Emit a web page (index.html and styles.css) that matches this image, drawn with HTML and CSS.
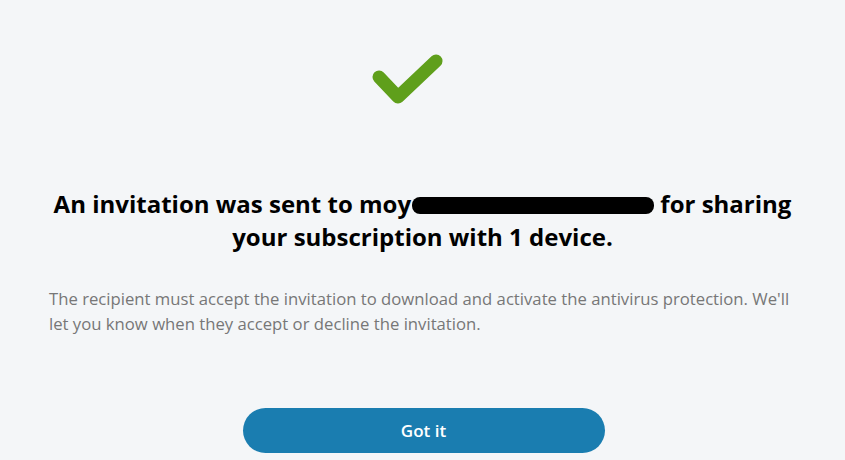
FILE: index.html
```html
<!DOCTYPE html>
<html lang="en">
<head>
  <meta charset="UTF-8">
  <title>Invitation sent</title>
  <link rel="stylesheet" href="styles.css">
</head>
<body>
  <div class="dialog">
    <div class="check">
      <svg width="85" height="70" viewBox="0 0 85 70">
        <path d="M14 32 L33 52 L71 16" fill="none" stroke="#5f9f1b" stroke-width="13" stroke-linecap="round" stroke-linejoin="round"/>
      </svg>
    </div>

    <h2 class="title">An invitation was sent to moy<span class="hidden-mail"></span> for sharing<br>your subscription with 1 device.</h2>

    <p class="note">The recipient must accept the invitation to download and activate the antivirus protection. We'll let you know when they accept or decline the invitation.</p>

    <div class="actions">
      <button class="btn-ok">Got it</button>
    </div>
  </div>
</body>
</html>
```

FILE: styles.css
```css
body {
  margin: 0;
  background-color: #f4f6f8;
  font-family: "Open Sans", "Noto Sans", Arial, sans-serif;
}

.dialog {
  padding: 45px 49px 0 49px;
}

.check {
  display: flex;
  justify-content: center;
  margin-left: -30px;
}

.check svg {
  display: block;
}

.title {
  margin: 72px -10px 0 -10px;
  font-size: 24px;
  font-weight: 700;
  line-height: 33px;
  text-align: center;
  color: #000;
}

/* e-mail address blacked out */
.hidden-mail {
  display: inline-block;
  width: 242px;
  height: 17px;
  margin-left: 1px;
  background-color: #000;
  border-radius: 8px;
  vertical-align: -1px;
}

.note {
  margin: 33px 0 0 0;
  font-size: 16.7px;
  line-height: 25px;
  color: #777;
}

.actions {
  display: flex;
  justify-content: center;
  margin-top: 72px;
  margin-left: 2px;
}

.btn-ok {
  width: 362px;
  height: 45px;
  border: none;
  border-radius: 23px;
  background-color: #1a7db0;
  color: white;
  font-family: inherit;
  font-size: 17px;
  font-weight: 600;
  cursor: pointer;
}
```
